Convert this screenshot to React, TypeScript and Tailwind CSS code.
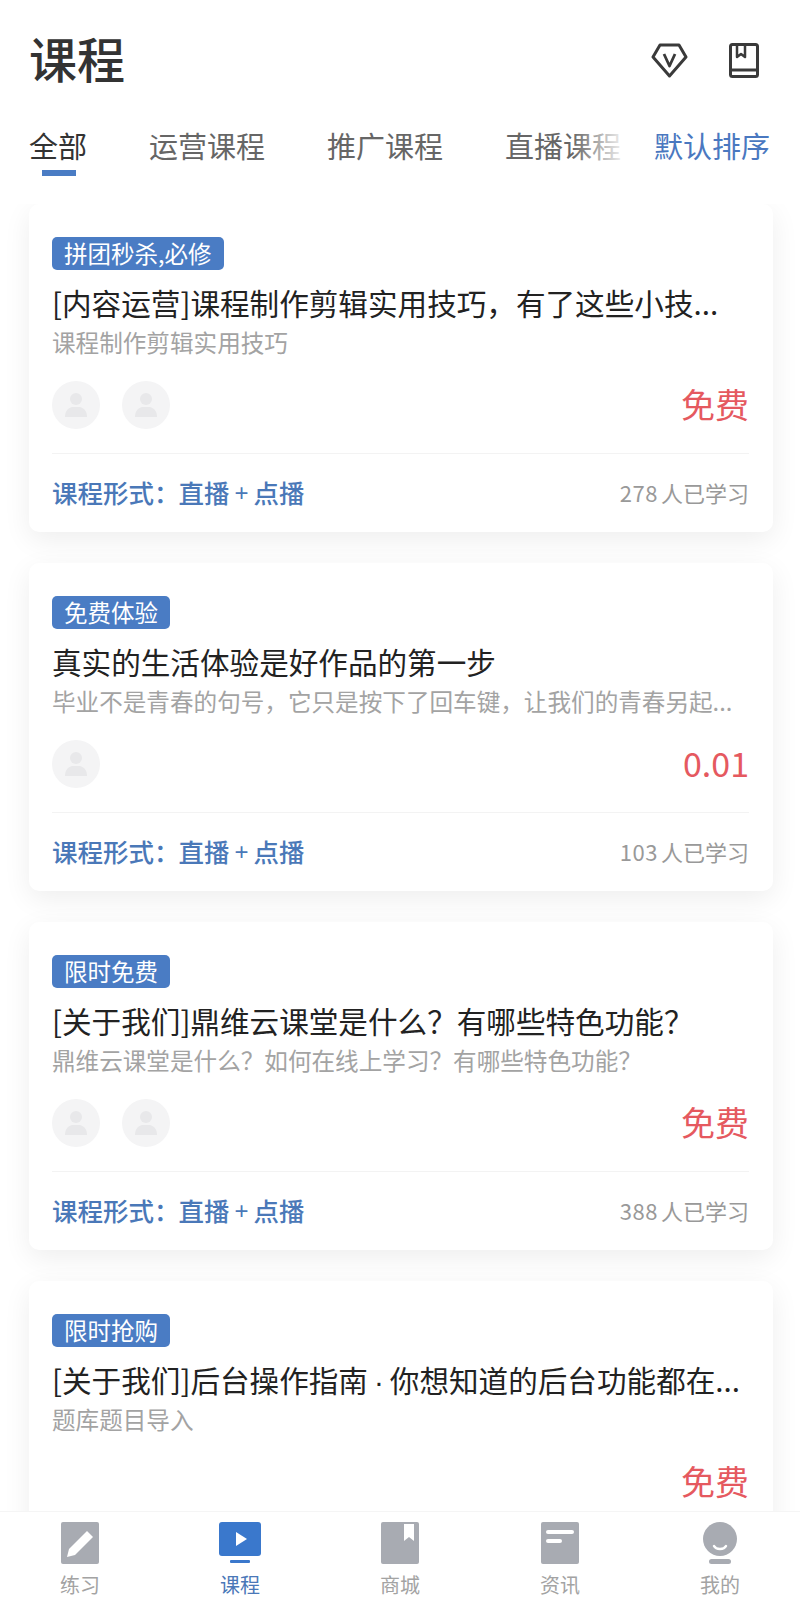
import React from "react";

const courses = [
  {
    tag: "拼团秒杀,必修",
    title: "[内容运营]课程制作剪辑实用技巧，有了这些小技...",
    sub: "课程制作剪辑实用技巧",
    avatars: 2,
    price: "免费",
    learners: "278",
  },
  {
    tag: "免费体验",
    title: "真实的生活体验是好作品的第一步",
    sub: "毕业不是青春的句号，它只是按下了回车键，让我们的青春另起...",
    avatars: 1,
    price: "0.01",
    learners: "103",
  },
  {
    tag: "限时免费",
    title: "[关于我们]鼎维云课堂是什么？有哪些特色功能？",
    sub: "鼎维云课堂是什么？如何在线上学习？有哪些特色功能？",
    avatars: 2,
    price: "免费",
    learners: "388",
  },
  {
    tag: "限时抢购",
    title: "[关于我们]后台操作指南 · 你想知道的后台功能都在...",
    sub: "题库题目导入",
    avatars: 0,
    price: "免费",
    learners: "",
  },
];

const Avatar = () => (
  <div className="w-[48px] h-[48px] rounded-full bg-[#f4f4f5] flex items-center justify-center">
    <svg width="24" height="26" viewBox="0 0 24 26" fill="#e8e8ea">
      <circle cx="12" cy="7" r="6" />
      <path d="M1 25c0-6 3-9 7-10h8c4 1 7 4 7 10z" />
    </svg>
  </div>
);

const tabs = [
  {
    label: "练习",
    icon: (
      <svg width="38" height="42" viewBox="0 0 38 42">
        <rect width="38" height="42" rx="2" fill="#a8abb2" />
        <path d="M26 9l6 6-18 18-8 2 2-8z" fill="#fff" />
      </svg>
    ),
  },
  {
    label: "课程",
    active: true,
    icon: (
      <svg width="42" height="42" viewBox="0 0 42 42">
        <rect width="42" height="34" rx="3" fill="#3a78cc" />
        <path d="M17 10l11 7-11 7z" fill="#fff" />
        <rect x="11" y="38" width="20" height="3" rx="1" fill="#3a78cc" />
      </svg>
    ),
  },
  {
    label: "商城",
    icon: (
      <svg width="38" height="42" viewBox="0 0 38 42">
        <rect width="38" height="42" rx="2" fill="#a8abb2" />
        <path d="M23 2h10v17l-5-4-5 4z" fill="#fff" />
      </svg>
    ),
  },
  {
    label: "资讯",
    icon: (
      <svg width="38" height="42" viewBox="0 0 38 42">
        <rect width="38" height="42" rx="2" fill="#a8abb2" />
        <rect x="5" y="8" width="28" height="4" rx="2" fill="#fff" />
        <rect x="5" y="17" width="16" height="4" rx="2" fill="#fff" />
      </svg>
    ),
  },
  {
    label: "我的",
    icon: (
      <svg width="34" height="42" viewBox="0 0 34 42">
        <circle cx="17" cy="17" r="17" fill="#a8abb2" />
        <path d="M11 24c2 4 10 4 12 0" stroke="#fff" strokeWidth="2.5" fill="none" strokeLinecap="round" />
        <rect x="6" y="37" width="22" height="5" rx="2.5" fill="#a8abb2" />
      </svg>
    ),
  },
];

const CourseCard = ({ course }: { course: (typeof courses)[number] }) => (
  <div className="ml-[29px] w-[744px] h-[328px] shrink-0 rounded-[10px] bg-white shadow-[0_8px_28px_rgba(0,0,0,0.07)] pl-[23px] pr-[24px] pt-[33px]">
    <div className="flex">
      <span className="h-[33px] rounded-[5px] bg-[#4a7cc4] px-[12px] text-[23.5px] leading-[33px] text-white">
        {course.tag}
      </span>
    </div>
    <div className="mt-[13px] h-[40px] whitespace-nowrap text-[29.6px] leading-[40px] text-[#222222]">
      {course.title.split(" · ").map((part, i) =>
        i === 0 ? (
          part
        ) : (
          <span key={i}>
            <span className="mx-[6px] font-['Liberation_Sans']">·</span>
            {part}
          </span>
        )
      )}
    </div>
    <div className="mt-[2px] h-[34px] whitespace-nowrap text-[23.6px] leading-[34px] text-[#a3a3a3]">
      {course.sub}
    </div>
    <div className="mt-[22px] h-[48px] flex items-center justify-between">
      <div className="flex gap-[22px]">
        {Array.from({ length: course.avatars }).map((_, i) => (
          <Avatar key={i} />
        ))}
      </div>
      <div className="pb-[3px] text-[34px] leading-[42px] text-[#e5595f]">{course.price}</div>
    </div>
    <div className="mt-[24px] h-px bg-[#f3f3f3]"></div>
    {course.learners && (
      <div className="h-[77px] flex items-center justify-between">
        <div className="flex items-center text-[25.5px] font-medium text-[#4a78b8]">
          课程形式：<span className="ml-[-1px]">直播</span>
          <span className="mx-[5px] font-['Liberation_Sans'] text-[24px]">+</span>
          <span>点播</span>
        </div>
        <div className="text-[22px] text-[#999999]">
          <span className="mr-[3px] tracking-[0.5px]">{course.learners}</span>人已学习
        </div>
      </div>
    )}
  </div>
);

const App = () => {
  return (
    <div className="h-[1617px] w-[800px] overflow-hidden bg-white flex flex-col font-['Noto_Sans_CJK_SC','Liberation_Sans',sans-serif]">
      <div className="h-[120px] shrink-0 flex items-center justify-between pl-[29px] pr-[41px]">
        <div className="mb-[6px] text-[48px] font-medium leading-none text-[#333333]">课程</div>
        <div className="flex items-center gap-[41px]">
          <svg width="37" height="35" viewBox="0 0 37 35" fill="none" stroke="#3a3a3a" strokeWidth="3" strokeLinejoin="round">
            <path d="M9 2h19l7 12-16.500 19L2 14z" />
            <path d="M13 11l5.500 12 5.500-12" strokeWidth="2.800" />
          </svg>
          <svg width="30" height="35" viewBox="0 0 30 35" fill="none" stroke="#3a3a3a" strokeWidth="3" strokeLinejoin="round">
            <rect x="1.500" y="1.500" width="27" height="32" rx="2" />
            <path d="M1.500 27h27" />
            <path d="M8 2v12l4-3 4 3V2" strokeWidth="2.500" />
          </svg>
        </div>
      </div>

      <div className="relative h-[84px] shrink-0 pl-[29px]">
        <div className="flex gap-[62px] text-[29px] leading-[40px] pt-[5px] text-[#666666] whitespace-nowrap">
          <span className="text-[#333333]">全部</span>
          <span>运营课程</span>
          <span>推广课程</span>
          <span>直播课程</span>
        </div>
        <div className="absolute left-[42px] top-[50px] h-[6px] w-[34px] bg-[#4a7cc4]"></div>
        <div className="absolute right-0 top-0 bottom-0 flex">
          <div className="w-[80px] bg-gradient-to-r from-transparent to-white to-70%"></div>
          <div className="bg-white pl-[2px] pr-[30px] pt-[5px] text-[29px] leading-[40px] text-[#4a78c0]">默认排序</div>
        </div>
      </div>

      <div className="flex-1 min-h-0 overflow-hidden flex flex-col gap-[31px]">
        {courses.map((course, i) => (
          <CourseCard key={i} course={course} />
        ))}
      </div>

      <div className="h-[106px] shrink-0 bg-white border-t border-[#f5f5f5] grid grid-cols-5 pt-[10px]">
        {tabs.map((tab) => (
          <div key={tab.label} className="flex flex-col items-center">
            <div className="h-[42px] flex items-center">{tab.icon}</div>
            <div className={`mt-[7px] text-[20px] leading-[28px] ${tab.active ? "text-[#4a78b8]" : "text-[#a3a3a3]"}`}>
              {tab.label}
            </div>
          </div>
        ))}
      </div>
    </div>
  );
};

export default App;
